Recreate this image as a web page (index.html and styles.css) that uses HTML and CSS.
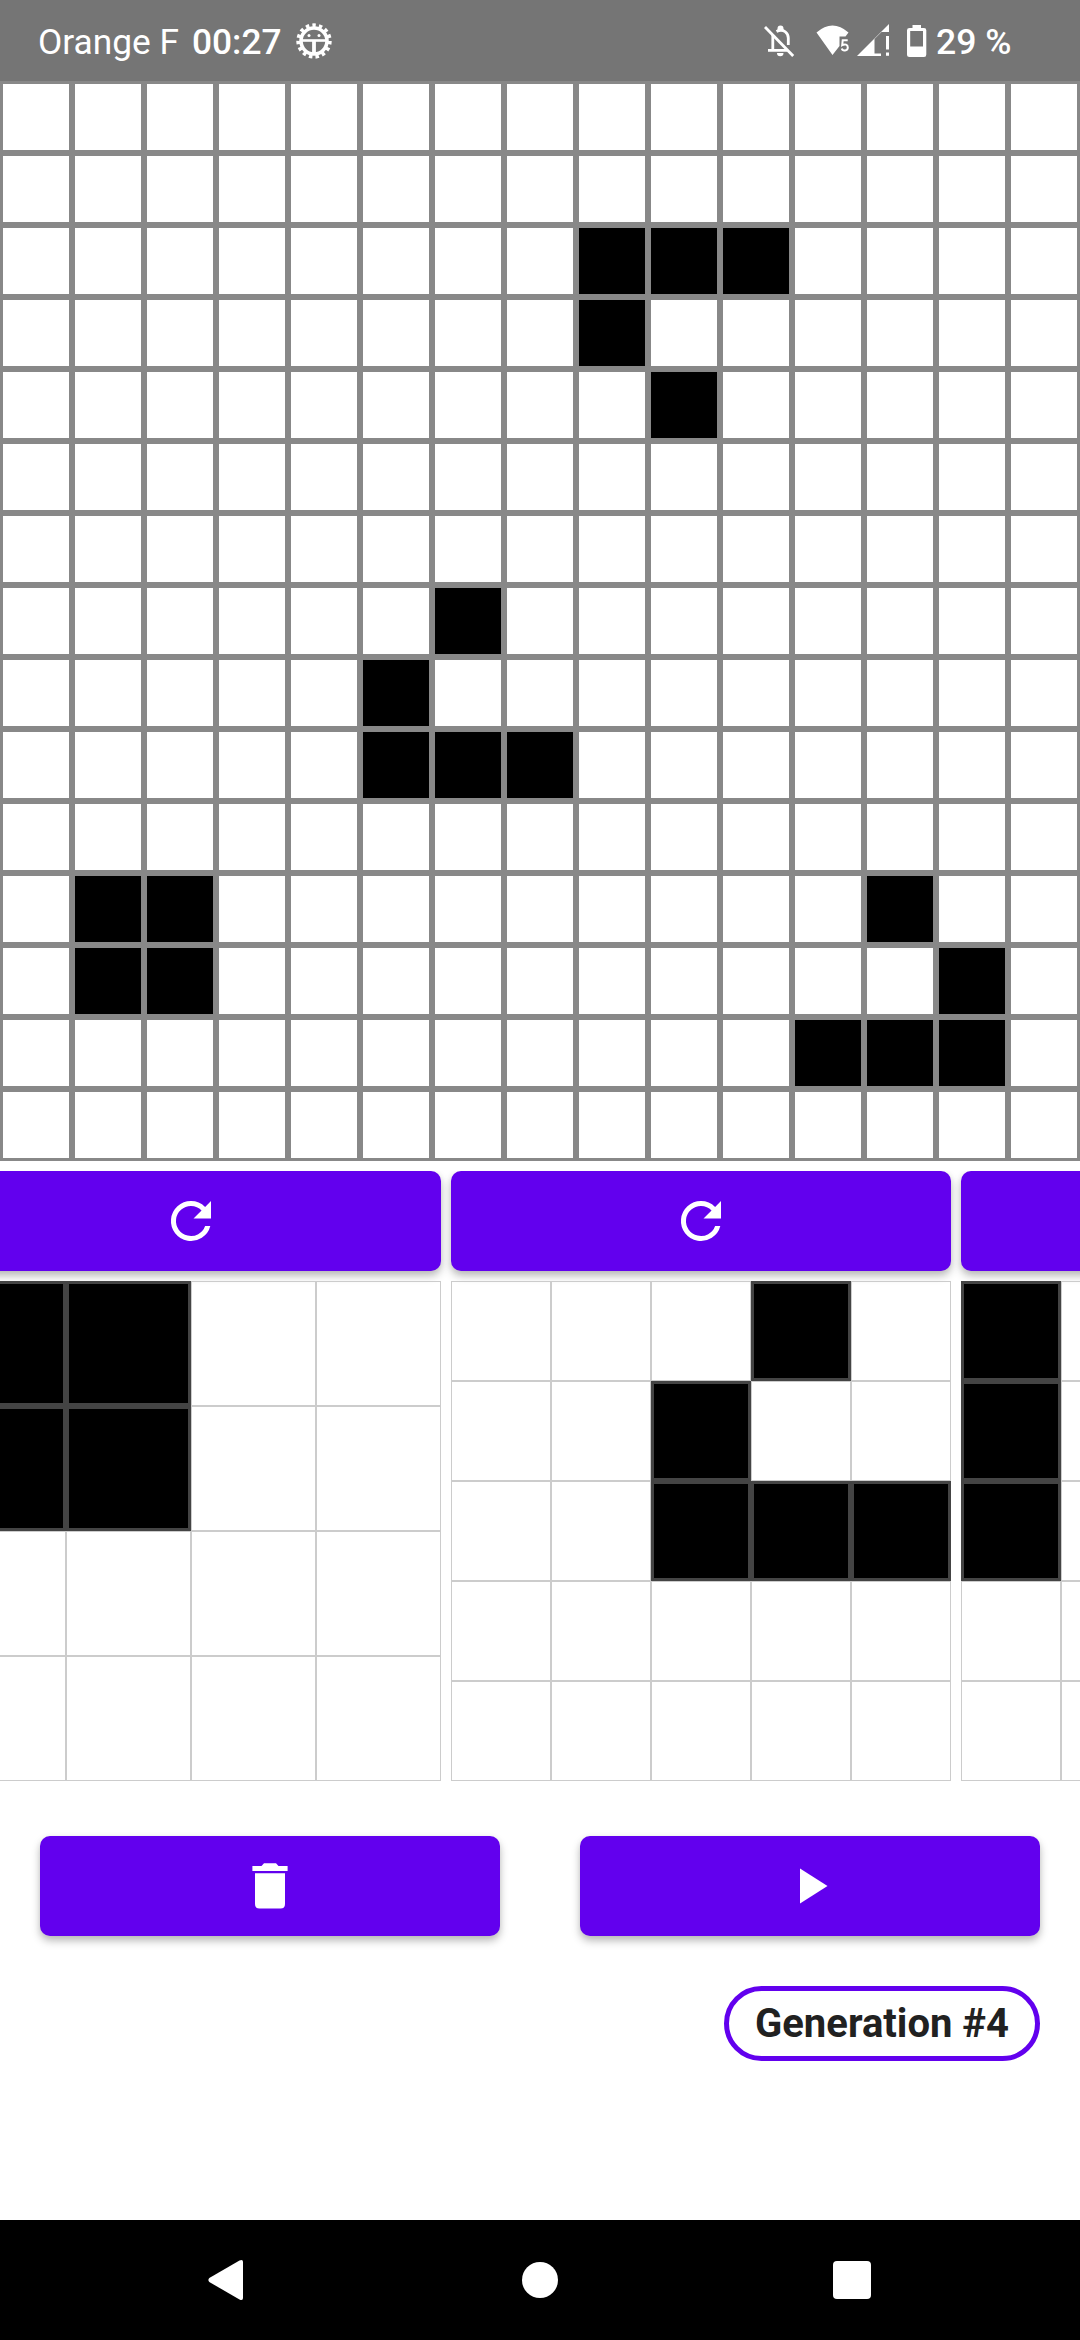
FILE: index.html
```html
<!DOCTYPE html>
<html lang="en">
<head>
<meta charset="utf-8">
<title>Game of Life</title>
<link rel="stylesheet" href="styles.css">
</head>
<body>
<header class="status">
  <span class="carrier">Orange F</span>
  <span class="clock">00:27</span>
  <svg class="gear" width="36" height="36" viewBox="-18 -18 36 36">
    <circle r="13" fill="none" stroke="#fff" stroke-width="3.600"/>
    <circle r="15.600" fill="none" stroke="#fff" stroke-width="4.200" pathLength="150" stroke-dasharray="5.200 4.800" stroke-dashoffset="0"/>
    <path d="M-12-.500H12" stroke="#fff" stroke-width="2.600"/>
    <path d="M0 0V13" stroke="#fff" stroke-width="3.800"/>
    <circle cx="-5" cy="-5.500" r="1.500" fill="#fff"/><circle cx="5" cy="-5.500" r="1.500" fill="#fff"/>
  </svg>
  <span class="spacer"></span>
  <svg class="bell" width="32" height="34" viewBox="762 24 32 34">
    <path d="M771.8 35V51M767 50.3H786M775.5 31.5C783 27.5 787.3 34 787.3 38V45" fill="none" stroke="#fff" stroke-width="2.8"/>
    <path d="M776.5 31V28.5A3 3 0 0 1 782.500 28.500V31zM776 53h6.500a3.200 3.200 0 0 1-6.500 0z" fill="#fff"/>
    <path d="M766 27.500L794.500 56" stroke="#757575" stroke-width="2"/>
    <path d="M764 27L792.200 56" stroke="#fff" stroke-width="2.800"/>
  </svg>
  <svg class="wifi" width="34" height="34" viewBox="815 24 34 34">
    <path d="M815.500 32.500Q831.500 18.500 847.500 32.500L844.500 36.500H838.500V46L831.500 55z" fill="#fff"/>
    <path d="M846.700 40.200H841.700L841.200 45.200C844 43.700 846.800 44.400 846.800 47.400C846.800 51.200 841.500 51.300 840.800 48.500" fill="none" stroke="#fff" stroke-width="2"/>
  </svg>
  <svg class="signal" width="34" height="34" viewBox="855 24 34 34">
    <path d="M856 56L888 24V32H880.500L873.500 39V53.500H880V56z" fill="#fff"/>
    <path d="M885 36h3v13.500h-3zM885 52.500h3v3.200h-3z" fill="#fff"/>
  </svg>
  <svg class="battery" width="20" height="32" viewBox="0 0 20 32">
    <path fill="#fff" fill-rule="evenodd" d="M5.500 0H14V3H17Q19.300 3 19.300 5.300V29.500Q19.300 32 17 32H2.500Q0 32 0 29.500V5.300Q0 3 2.500 3H5.500zM3.200 6V21.500H16V6z"/>
  </svg>
  <span class="percent">29 %</span>
</header>

<main class="app">
  <div class="grid board" data-size="15" data-live="2,8 2,9 2,10 3,8 4,9 7,6 8,5 9,5 9,6 9,7 11,1 11,2 12,1 12,2 11,12 12,13 13,11 13,12 13,13"></div>

  <section class="patterns">
    <div class="pattern">
      <button class="btn" aria-label="Rotate"><svg width="60" height="60" viewBox="0 0 24 24"><path d="M17.650 6.350A7.958 7.958 0 0 0 12 4a8 8 0 1 0 7.730 10h-2.080A6 6 0 1 1 12 6c1.660 0 3.140.690 4.220 1.780L13 11h7V4z"/></svg></button>
      <div class="grid" data-size="4" data-live="0,0 0,1 1,0 1,1"></div>
    </div>
    <div class="pattern">
      <button class="btn" aria-label="Rotate"><svg width="60" height="60" viewBox="0 0 24 24"><path d="M17.650 6.350A7.958 7.958 0 0 0 12 4a8 8 0 1 0 7.730 10h-2.080A6 6 0 1 1 12 6c1.660 0 3.140.690 4.220 1.780L13 11h7V4z"/></svg></button>
      <div class="grid" data-size="5" data-live="0,3 1,2 2,2 2,3 2,4"></div>
    </div>
    <div class="pattern">
      <button class="btn" aria-label="Rotate"></button>
      <div class="grid" data-size="5" data-live="0,0 1,0 2,0"></div>
    </div>
  </section>

  <section class="controls">
    <button class="btn" aria-label="Clear"><svg width="60" height="60" viewBox="0 0 60 60"><path d="M12.400 10H21.500L24 7.200H36L38.500 10H47.600V15H12.400zM15 17.300H45V48Q45 52.600 40.500 52.600H19.500Q15 52.600 15 48z"/></svg></button>
    <button class="btn" aria-label="Play"><svg width="60" height="60" viewBox="0 0 24 24"><path d="M8 5v14l11-7z"/></svg></button>
  </section>

  <div class="footer"><span class="chip">Generation #4</span></div>
</main>

<nav class="navbar">
  <svg width="36" height="42" viewBox="0 0 36 42"><path d="M1.300 19L31.500 1.500Q35 0 35 3V39Q35 42 31.500 40.500L1.300 23Q-.5 21 1.300 19z" fill="#fff"/></svg>
  <span class="home"></span>
  <span class="recent"></span>
</nav>
<script src="grid.js"></script>
</body>
</html>
```
FILE: styles.css
```css
* { box-sizing: border-box; }

body {
  margin: 0;
  width: 1080px;
  height: 2340px;
  display: flex;
  flex-direction: column;
  overflow: hidden;
  background: #fff;
  font-family: Roboto, sans-serif;
}

svg { display: block; flex: none; }

.status {
  flex: none;
  height: 81px;
  display: flex;
  align-items: center;
  padding: 0 69px 0 38px;
  background: #757575;
  color: #fff;
  font-size: 35.3px;
  line-height: 42px;
  white-space: pre;
}
.carrier { width: 141px; padding-top: 3px; }
.clock { width: 89px; margin-left: 13px; padding-top: 3px; font-weight: 500; }
.gear { margin-left: 15px; }
.spacer { flex: 1; }
.bell { margin-right: 21px; }
.wifi { margin-right: 6px; }
.signal { margin-right: 17px; }
.battery { margin-right: 9px; }
.percent { padding-top: 3px; width: 75px; font-size: 35.6px; font-weight: 500; }

.app { flex: 1; }

.grid {
  display: grid;
  width: 500px;
  height: 500px;
  grid-template-columns: repeat(var(--size), 1fr);
  grid-template-rows: repeat(var(--size), 1fr);
}
.cell { border: 1px solid #ccc; }
.cell.live { border: 3px solid #444; background: #000; }

.board { width: 1080px; height: 1080px; }
.board .cell { border: 3px solid #888; }

.patterns {
  display: flex;
  gap: 10px;
  margin: 10px 0 0 -59px;
  width: 1139px;
  overflow: hidden;
}
.pattern {
  flex: none;
  display: flex;
  flex-direction: column;
  gap: 10px;
}

.btn {
  height: 100px;
  padding: 0;
  border: 0;
  border-radius: 10px;
  background: #6200ee;
  display: flex;
  align-items: center;
  justify-content: center;
  box-shadow: 0 5px 9px rgba(0, 0, 0, .26), 0 1px 6px rgba(0, 0, 0, .05);
}
.btn svg { fill: #fff; }

.controls {
  display: grid;
  grid-template-columns: 1fr 1fr;
  gap: 80px;
  padding: 55px 40px 0;
}

.footer {
  display: flex;
  justify-content: flex-end;
  padding: 50px 40px 0;
}
.chip {
  width: 316px;
  height: 75px;
  border: 5px solid #6200ee;
  border-radius: 38px;
  color: #212121;
  font-size: 40px;
  font-weight: 700;
  line-height: 66px;
  text-align: center;
  white-space: nowrap;
}

.navbar {
  flex: none;
  height: 120px;
  display: flex;
  align-items: center;
  justify-content: space-between;
  padding: 0 209px 0 208px;
  background: #000;
}
.home { width: 36px; height: 36px; margin-left: 3px; border-radius: 50%; background: #fff; }
.recent { width: 38px; height: 38px; border-radius: 4px; background: #fff; }
```
FILE: grid.js
```js
document.querySelectorAll('.grid').forEach(function (grid) {
  var size = Number(grid.dataset.size);
  var live = grid.dataset.live.split(' ');
  grid.style.setProperty('--size', size);
  for (var r = 0; r < size; r++) {
    for (var c = 0; c < size; c++) {
      var cell = document.createElement('div');
      cell.className = live.includes(r + ',' + c) ? 'cell live' : 'cell';
      grid.appendChild(cell);
    }
  }
});
```
